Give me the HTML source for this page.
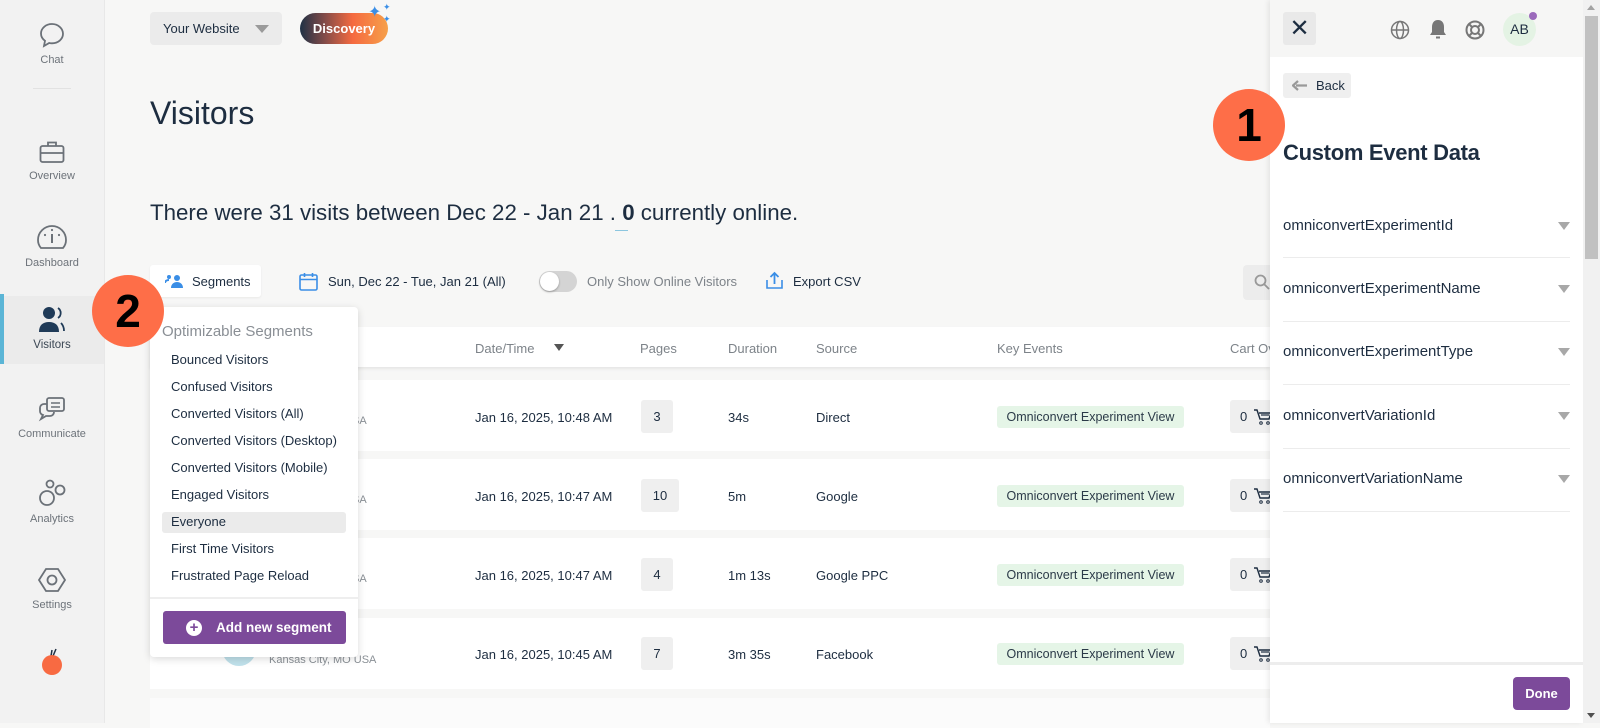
<!DOCTYPE html>
<html><head><meta charset="utf-8">
<style>
*{box-sizing:border-box;margin:0;padding:0}
body{width:1600px;height:723px;overflow:hidden;position:relative;background:#f7f7f6;font-family:"Liberation Sans",sans-serif;color:#1d2d40}
.a{position:absolute}
.side{left:0;top:0;width:105px;height:723px;background:#f2f2f2;border-right:1px solid #e8e8e8}
.nav{position:absolute;left:0;width:104px;text-align:center;font-size:11px;color:#6d737a}
.nav svg{display:block;margin:0 auto 6px}
.t13{font-size:13px}
.row{position:absolute;left:150px;width:1120px;background:#fff;height:71px}
.pg{position:absolute;width:32px;height:33px;background:#efefef;border-radius:3px;font-size:13px;text-align:center;line-height:33px}
.tag{position:absolute;left:997px;width:187px;height:22px;background:#e5f5e7;border-radius:3px;font-size:12.5px;text-align:center;line-height:22px;color:#2b3a48}
.cart{position:absolute;left:1230px;width:45px;height:33px;background:#efefef;border-radius:3px;font-size:13px;line-height:33px;padding-left:10px}
.cart svg{position:absolute;left:24px;top:8px}
.cell{position:absolute;font-size:13px}
.dd div.i{position:absolute;left:21px;font-size:13px;color:#1d2d40}
.prow{position:absolute;left:1283px;width:287px;font-size:15px;color:#1d2d40}
.prow .ar{position:absolute;right:0;top:5px;width:0;height:0;border-left:6px solid transparent;border-right:6px solid transparent;border-top:8px solid #a8a8a8}
.pline{position:absolute;left:1283px;width:287px;height:1px;background:#ececec}
</style></head><body>

<!-- sidebar -->
<div class="a side"></div>
<div class="nav" style="top:22px"><svg width="26" height="26" viewBox="0 0 26 26"><path d="M13 2C6.9 2 2 6.2 2 11.5c0 3 1.6 5.6 4 7.3L5 24l5.2-3c.9.2 1.8.3 2.8.3 6.1 0 11-4.2 11-9.5S19.1 2 13 2z" fill="none" stroke="#6b7178" stroke-width="1.8"/></svg>Chat</div>
<div class="a" style="left:33px;top:88px;width:38px;height:1px;background:#e2e2e2"></div>
<div class="nav" style="top:140px"><svg width="26" height="24" viewBox="0 0 26 24"><rect x="1.5" y="6" width="23" height="16" rx="2" fill="none" stroke="#6b7178" stroke-width="1.8"/><path d="M9 6V2.5h8V6M1.5 13h23" fill="none" stroke="#6b7178" stroke-width="1.8"/></svg>Overview</div>
<div class="nav" style="top:221px"><svg width="32" height="30" viewBox="0 0 32 30"><path d="M5 27h22a12 12 0 0 0 3-8 14 14 0 0 0-28 0 12 12 0 0 0 3 8z" fill="none" stroke="#6b7178" stroke-width="1.8"/><path d="M16 13v9" stroke="#6b7178" stroke-width="2"/><circle cx="16" cy="9" r="1.1" fill="#6b7178"/><circle cx="9" cy="14" r="1.1" fill="#6b7178"/><circle cx="23" cy="14" r="1.1" fill="#6b7178"/></svg>Dashboard</div>
<div class="a" style="left:0;top:296px;width:104px;height:68px;background:#ebebeb"></div>
<div class="a" style="left:0;top:294px;width:4px;height:70px;background:#5bb5d6"></div>
<div class="nav" style="top:305px;color:#3b4754;font-size:11.5px"><svg width="28" height="28" viewBox="0 0 28 28"><circle cx="11" cy="8" r="6" fill="#1f3a57"/><path d="M1 27c0-7 4-10 10-10s10 3 10 10z" fill="#1f3a57"/><path d="M20 3a6 6 0 0 1 0 10M23 18c2 2 3 5 3 8" fill="none" stroke="#1f3a57" stroke-width="1.8"/></svg>Visitors</div>
<div class="nav" style="top:396px"><svg width="28" height="26" viewBox="0 0 28 26"><rect x="9" y="2" width="17" height="13" rx="2" fill="none" stroke="#6b7178" stroke-width="1.8"/><path d="M13 7h9M13 11h9" stroke="#6b7178" stroke-width="1.6"/><path d="M9 8H6a4 4 0 0 0-4 4v3a4 4 0 0 0 3 4l-2 4 5-3h4a4 4 0 0 0 4-4" fill="none" stroke="#6b7178" stroke-width="1.8"/></svg>Communicate</div>
<div class="nav" style="top:479px"><svg width="28" height="28" viewBox="0 0 28 28"><circle cx="9" cy="19" r="7" fill="none" stroke="#6b7178" stroke-width="1.8"/><circle cx="12" cy="5" r="3.5" fill="none" stroke="#6b7178" stroke-width="1.8"/><circle cx="22" cy="11" r="4.5" fill="none" stroke="#6b7178" stroke-width="1.8"/></svg>Analytics</div>
<div class="nav" style="top:567px"><svg width="28" height="26" viewBox="0 0 28 26"><path d="M8 2h12l7 11-7 11H8L1 13z" fill="none" stroke="#6b7178" stroke-width="1.8"/><circle cx="14" cy="13" r="4.5" fill="none" stroke="#6b7178" stroke-width="1.8"/></svg>Settings</div>
<svg class="a" style="left:40px;top:648px" width="24" height="28" viewBox="0 0 24 28"><path d="M11 8l1-6M13 8l3-7" stroke="#203044" stroke-width="1.5"/><circle cx="12" cy="17" r="10" fill="#f86a42"/></svg>

<!-- top bar -->
<div class="a" style="left:150px;top:12px;width:132px;height:33px;background:#ebebeb;border-radius:4px;font-size:13px;line-height:33px;padding-left:13px;color:#1d2d40">Your Website<span class="a" style="left:105px;top:13px;border-left:7px solid transparent;border-right:7px solid transparent;border-top:8px solid #9a9a9a"></span></div>
<div class="a" style="left:300px;top:13px;width:88px;height:31px;border-radius:16px;background:linear-gradient(90deg,#1f3146,#8a4d48 30%,#f56a40 60%,#f6a04a);color:#fff;font-size:13px;font-weight:bold;line-height:31px;text-align:center">Discovery</div>
<div class="a" style="left:368px;top:2px;color:#3a8ee6;font-size:16px">✦</div>
<div class="a" style="left:383px;top:2px;color:#3a8ee6;font-size:9px">✦</div>
<div class="a" style="left:383px;top:14px;color:#3a8ee6;font-size:9px">✦</div>

<div class="a" style="left:150px;top:95px;font-size:32px;font-weight:300;color:#1d2d40">Visitors</div>
<div class="a" style="left:150px;top:200px;font-size:22.3px;color:#1d2d40">There were 31 visits between Dec 22 - Jan 21 . <b style="font-weight:600">0</b> currently online.</div>
<div class="a" style="left:615px;top:230px;width:13px;height:1px;background:#8cc6df"></div>

<!-- toolbar -->
<div class="a" style="left:150px;top:265px;width:111px;height:32px;background:#fff;border-radius:3px;box-shadow:0 1px 2px rgba(0,0,0,.06)"></div>
<svg class="a" style="left:165px;top:274px" width="18" height="14" viewBox="0 0 18 14"><circle cx="12" cy="4" r="3" fill="#3a8ee6"/><path d="M6 14c0-4 3-6 6-6s6 2 6 6z" fill="#3a8ee6"/><circle cx="4" cy="3" r="2" fill="#3a8ee6"/><path d="M0 9c0-2 2-3 4-3" stroke="#3a8ee6" stroke-width="2" fill="none"/></svg>
<div class="a t13" style="left:192px;top:274px">Segments</div>
<svg class="a" style="left:299px;top:272px" width="19" height="19" viewBox="0 0 19 19"><rect x="1" y="3" width="17" height="15" rx="1.5" fill="none" stroke="#3a8ee6" stroke-width="1.6"/><path d="M1 7.5h17M5.5 1v4M13.5 1v4" stroke="#3a8ee6" stroke-width="1.6"/></svg>
<div class="a t13" style="left:328px;top:274px">Sun, Dec 22 - Tue, Jan 21 (All)</div>
<div class="a" style="left:539px;top:271px;width:38px;height:21px;border-radius:11px;background:#d4d4d4"></div>
<div class="a" style="left:540px;top:272px;width:19px;height:19px;border-radius:50%;background:#fff;box-shadow:0 1px 2px rgba(0,0,0,.3)"></div>
<div class="a t13" style="left:587px;top:274px;color:#7d8389">Only Show Online Visitors</div>
<svg class="a" style="left:766px;top:271px" width="17" height="19" viewBox="0 0 17 19"><path d="M1 9v8h15V9" fill="none" stroke="#3a8ee6" stroke-width="1.6"/><path d="M8.5 13V2M4.5 6l4-4 4 4" fill="none" stroke="#3a8ee6" stroke-width="1.8"/></svg>
<div class="a t13" style="left:793px;top:274px">Export CSV</div>
<div class="a" style="left:1243px;top:265px;width:40px;height:35px;background:#ececec;border-radius:4px"></div>
<svg class="a" style="left:1254px;top:274px" width="16" height="16" viewBox="0 0 16 16"><circle cx="6.5" cy="6.5" r="5" fill="none" stroke="#999" stroke-width="1.8"/><path d="M10 10l5 5" stroke="#999" stroke-width="1.8"/></svg>

<!-- table -->
<div class="a" style="left:150px;top:327px;width:1120px;height:40px;background:#fff;box-shadow:0 2px 3px rgba(0,0,0,.07)"></div>
<div class="cell" style="left:475px;top:341px;color:#7d8389">Date/Time</div>
<div class="a" style="left:554px;top:344px;border-left:5px solid transparent;border-right:5px solid transparent;border-top:7px solid #555"></div>
<div class="cell" style="left:640px;top:341px;color:#7d8389">Pages</div>
<div class="cell" style="left:728px;top:341px;color:#7d8389">Duration</div>
<div class="cell" style="left:816px;top:341px;color:#7d8389">Source</div>
<div class="cell" style="left:997px;top:341px;color:#7d8389">Key Events</div>
<div class="cell" style="left:1230px;top:341px;color:#7d8389">Cart Ov</div>

<div class="row" style="top:380px"></div>
<div class="row" style="top:459px"></div>
<div class="row" style="top:538px"></div>
<div class="row" style="top:618px"></div>
<div class="a" style="left:150px;top:698px;width:1120px;height:30px;background:#fbfbfb"></div>

<div class="cell" style="left:352px;top:415px;color:#8a9096;font-size:11px">SA</div>
<div class="cell" style="left:352px;top:494px;color:#8a9096;font-size:11px">SA</div>
<div class="cell" style="left:352px;top:573px;color:#8a9096;font-size:11px">SA</div>
<div class="a" style="left:222px;top:632px;width:34px;height:34px;border-radius:50%;background:#bfe0ea"></div>
<div class="cell" style="left:269px;top:654px;color:#8a9096;font-size:11px">Kansas City, MO USA</div>

<div class="cell" style="left:475px;top:410px">Jan 16, 2025, 10:48 AM</div>
<div class="cell" style="left:475px;top:489px">Jan 16, 2025, 10:47 AM</div>
<div class="cell" style="left:475px;top:568px">Jan 16, 2025, 10:47 AM</div>
<div class="cell" style="left:475px;top:647px">Jan 16, 2025, 10:45 AM</div>
<div class="pg" style="left:641px;top:400px">3</div>
<div class="pg" style="left:641px;top:479px;width:38px">10</div>
<div class="pg" style="left:641px;top:558px">4</div>
<div class="pg" style="left:641px;top:637px">7</div>
<div class="cell" style="left:728px;top:410px">34s</div>
<div class="cell" style="left:728px;top:489px">5m</div>
<div class="cell" style="left:728px;top:568px">1m 13s</div>
<div class="cell" style="left:728px;top:647px">3m 35s</div>
<div class="cell" style="left:816px;top:410px">Direct</div>
<div class="cell" style="left:816px;top:489px">Google</div>
<div class="cell" style="left:816px;top:568px">Google PPC</div>
<div class="cell" style="left:816px;top:647px">Facebook</div>
<div class="tag" style="top:406px">Omniconvert Experiment View</div>
<div class="tag" style="top:485px">Omniconvert Experiment View</div>
<div class="tag" style="top:564px">Omniconvert Experiment View</div>
<div class="tag" style="top:643px">Omniconvert Experiment View</div>
<div class="cart" style="top:400px">0<svg width="18" height="18" viewBox="0 0 18 18"><path d="M0 2h3l3 9h9l2-6H5" fill="none" stroke="#1d2d40" stroke-width="1.4"/><path d="M7 7h8" stroke="#1d2d40" stroke-width="1.2"/><circle cx="7" cy="15" r="1.3" fill="none" stroke="#1d2d40"/><circle cx="14" cy="15" r="1.3" fill="none" stroke="#1d2d40"/></svg></div>
<div class="cart" style="top:479px">0<svg width="18" height="18" viewBox="0 0 18 18"><path d="M0 2h3l3 9h9l2-6H5" fill="none" stroke="#1d2d40" stroke-width="1.4"/><path d="M7 7h8" stroke="#1d2d40" stroke-width="1.2"/><circle cx="7" cy="15" r="1.3" fill="none" stroke="#1d2d40"/><circle cx="14" cy="15" r="1.3" fill="none" stroke="#1d2d40"/></svg></div>
<div class="cart" style="top:558px">0<svg width="18" height="18" viewBox="0 0 18 18"><path d="M0 2h3l3 9h9l2-6H5" fill="none" stroke="#1d2d40" stroke-width="1.4"/><path d="M7 7h8" stroke="#1d2d40" stroke-width="1.2"/><circle cx="7" cy="15" r="1.3" fill="none" stroke="#1d2d40"/><circle cx="14" cy="15" r="1.3" fill="none" stroke="#1d2d40"/></svg></div>
<div class="cart" style="top:637px">0<svg width="18" height="18" viewBox="0 0 18 18"><path d="M0 2h3l3 9h9l2-6H5" fill="none" stroke="#1d2d40" stroke-width="1.4"/><path d="M7 7h8" stroke="#1d2d40" stroke-width="1.2"/><circle cx="7" cy="15" r="1.3" fill="none" stroke="#1d2d40"/><circle cx="14" cy="15" r="1.3" fill="none" stroke="#1d2d40"/></svg></div>

<!-- dropdown -->
<div class="a dd" style="left:150px;top:307px;width:208px;height:350px;background:#fff;border-radius:4px;box-shadow:0 2px 8px rgba(0,0,0,.15)">
<div class="i" style="left:12px;top:16px;font-size:15px;color:#8a8f95">Optimizable Segments</div>
<div class="i" style="top:45px">Bounced Visitors</div>
<div class="i" style="top:72px">Confused Visitors</div>
<div class="i" style="top:99px">Converted Visitors (All)</div>
<div class="i" style="top:126px">Converted Visitors (Desktop)</div>
<div class="i" style="top:153px">Converted Visitors (Mobile)</div>
<div class="i" style="top:180px">Engaged Visitors</div>
<div style="position:absolute;left:12px;top:205px;width:184px;height:21px;background:#ebebeb;border-radius:3px"></div>
<div class="i" style="top:207px">Everyone</div>
<div class="i" style="top:234px">First Time Visitors</div>
<div class="i" style="top:261px">Frustrated Page Reload</div>
<div style="position:absolute;left:0;top:290px;width:208px;height:2px;background:#eee"></div>
<div style="position:absolute;left:13px;top:304px;width:183px;height:33px;background:#7c4a9a;border-radius:3px;color:#fff;font-size:13.5px;font-weight:bold;line-height:33px;padding-left:53px">Add new segment</div>
<div style="position:absolute;left:36px;top:313px;width:16px;height:16px;border-radius:50%;background:#fff;color:#7c4a9a;font-weight:bold;font-size:15px;line-height:16px;text-align:center">+</div>
</div>

<!-- badge 2 -->
<div class="a" style="left:92px;top:275px;width:72px;height:72px;border-radius:50%;background:#fe6e48;font-size:46px;font-weight:bold;color:#000;text-align:center;line-height:72px">2</div>

<!-- right panel -->
<div class="a" style="left:1270px;top:0;width:313px;height:723px;background:#fff;box-shadow:-2px 0 5px rgba(0,0,0,.08)"></div>
<div class="a" style="left:1270px;top:0;width:313px;height:57px;background:#f6f6f5"></div>
<div class="a" style="left:1283px;top:12px;width:33px;height:33px;background:#e9e9e9;border-radius:3px;font-size:24px;text-align:center;line-height:33px;color:#1d2d40">✕</div>
<svg class="a" style="left:1390px;top:20px" width="20" height="20" viewBox="0 0 20 20"><circle cx="10" cy="10" r="8.5" fill="none" stroke="#777" stroke-width="1.5"/><ellipse cx="10" cy="10" rx="3.5" ry="8.5" fill="none" stroke="#777" stroke-width="1.5"/><path d="M1.5 10h17" stroke="#777" stroke-width="1.5"/></svg>
<svg class="a" style="left:1429px;top:19px" width="18" height="21" viewBox="0 0 18 21"><path d="M9 1c-4 0-6 3-6 7v5l-2 3h16l-2-3V8c0-4-2-7-6-7z" fill="#777"/><path d="M7 18.5h4" stroke="#777" stroke-width="2"/></svg>
<svg class="a" style="left:1465px;top:20px" width="20" height="20" viewBox="0 0 20 20"><circle cx="10" cy="10" r="8.5" fill="none" stroke="#777" stroke-width="2"/><circle cx="10" cy="10" r="4" fill="none" stroke="#777" stroke-width="2"/><path d="M4 4l3 3M16 4l-3 3M4 16l3-3M16 16l-3-3" stroke="#777" stroke-width="2"/></svg>
<div class="a" style="left:1503px;top:13px;width:33px;height:33px;border-radius:50%;background:#e4f3e4;font-size:14px;text-align:center;line-height:33px;color:#1d2d40">AB</div>
<div class="a" style="left:1529px;top:12px;width:8px;height:8px;border-radius:50%;background:#9b6abb"></div>

<div class="a" style="left:1283px;top:73px;width:68px;height:25px;background:#efefef;border-radius:3px;font-size:13px;line-height:25px;padding-left:33px">Back</div>
<svg class="a" style="left:1292px;top:80px" width="15" height="11" viewBox="0 0 15 11"><path d="M15 5.5H4M6 1L1 5.5 6 10" fill="none" stroke="#999" stroke-width="2.2"/></svg>
<div class="a" style="left:1283px;top:140px;font-size:22px;font-weight:bold;color:#1d2d40;letter-spacing:-.3px">Custom Event Data</div>

<div class="prow" style="top:217px">omniconvertExperimentId<span class="ar"></span></div>
<div class="pline" style="top:257px"></div>
<div class="prow" style="top:280px">omniconvertExperimentName<span class="ar"></span></div>
<div class="pline" style="top:321px"></div>
<div class="prow" style="top:343px">omniconvertExperimentType<span class="ar"></span></div>
<div class="pline" style="top:384px"></div>
<div class="prow" style="top:407px">omniconvertVariationId<span class="ar"></span></div>
<div class="pline" style="top:448px"></div>
<div class="prow" style="top:470px">omniconvertVariationName<span class="ar"></span></div>
<div class="pline" style="top:511px"></div>

<div class="a" style="left:1270px;top:662px;width:313px;height:3px;background:#ededed"></div>
<div class="a" style="left:1513px;top:677px;width:57px;height:33px;background:#7c4a9a;border-radius:4px;color:#fff;font-size:13px;font-weight:bold;text-align:center;line-height:33px">Done</div>

<!-- badge 1 -->
<div class="a" style="left:1213px;top:89px;width:72px;height:72px;border-radius:50%;background:#fe6e48;font-size:46px;font-weight:bold;color:#000;text-align:center;line-height:72px">1</div>

<!-- scrollbar -->
<div class="a" style="left:1583px;top:0;width:17px;height:723px;background:#f1f1f1"></div>
<div class="a" style="left:1585px;top:16px;width:13px;height:243px;background:#c1c1c1"></div>
<div class="a" style="left:1587px;top:5px;border-left:4px solid transparent;border-right:4px solid transparent;border-bottom:5px solid #a3a3a3"></div>
<div class="a" style="left:1587px;top:713px;border-left:4px solid transparent;border-right:4px solid transparent;border-top:5px solid #505050"></div>
</body></html>
